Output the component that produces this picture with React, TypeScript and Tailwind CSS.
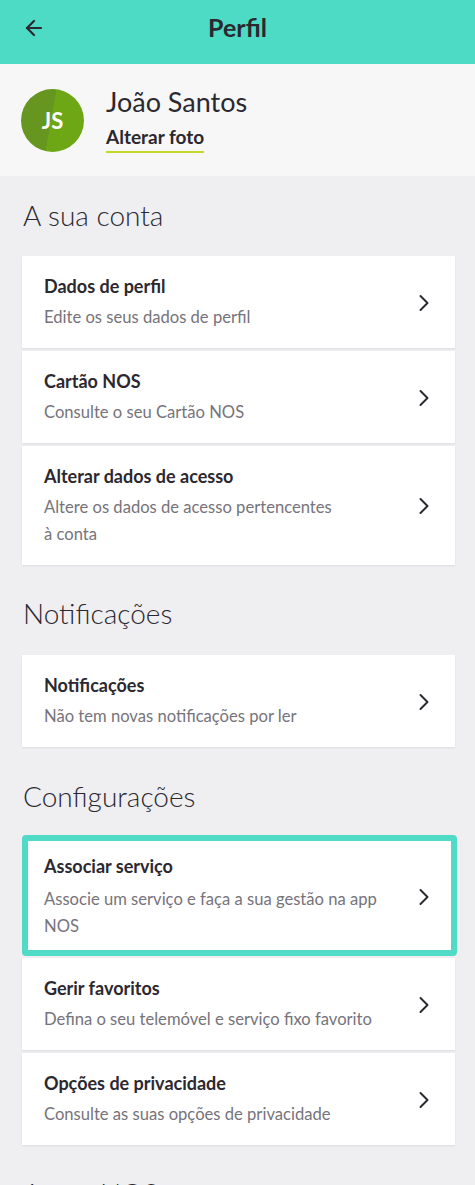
import { ArrowLeft, ChevronRight } from "lucide-react";

type MenuItem = {
  title: string;
  lines: string[];
};

const accountItems: MenuItem[] = [
  { title: "Dados de perfil", lines: ["Edite os seus dados de perfil"] },
  { title: "Cartão NOS", lines: ["Consulte o seu Cartão NOS"] },
  {
    title: "Alterar dados de acesso",
    lines: ["Altere os dados de acesso pertencentes", "à conta"],
  },
];

const settingsItems: MenuItem[] = [
  { title: "Gerir favoritos", lines: ["Defina o seu telemóvel e serviço fixo favorito"] },
  { title: "Opções de privacidade", lines: ["Consulte as suas opções de privacidade"] },
];

function ItemText({ item, highlighted }: { item: MenuItem; highlighted?: boolean }) {
  return (
    <div className="min-w-0 flex-1">
      <p className="text-[18px] font-bold leading-[24px] text-[#2b2830]">{item.title}</p>
      <p
        className={`${highlighted ? "mt-[8px]" : "mt-[6px]"} text-[16.6px] leading-[27px] text-[#76737b]`}
      >
        {item.lines.map((line, i) => (
          <span key={i} className="block whitespace-nowrap">
            {line}
          </span>
        ))}
      </p>
    </div>
  );
}

function Card({ item }: { item: MenuItem }) {
  return (
    <button
      type="button"
      className="flex w-full items-center bg-white pb-[17px] pl-[22px] pr-[17px] pt-[18px] text-left shadow-[0_1px_2px_rgba(0,0,0,0.08)]"
    >
      <ItemText item={item} />
      <ChevronRight size={28} strokeWidth={1.7} className="shrink-0 text-[#2b2830]" />
    </button>
  );
}

function SectionTitle({ children }: { children: string }) {
  return (
    <h2 className="pl-[23px] text-[28px] font-light leading-[32px] text-[#2b2830]">{children}</h2>
  );
}

export default function App() {
  return (
    <div className="min-h-[1185px] w-full bg-[#efeff1] font-['Lato',sans-serif]">
      <header className="relative flex h-[64px] items-center justify-center bg-[#4ddbc6] pb-[8px]">
        <button type="button" className="absolute left-[22px] top-[16px] text-[#2b2830]" aria-label="Voltar">
          <ArrowLeft size={24} strokeWidth={2.2} />
        </button>
        <h1 className="text-[25px] font-bold text-[#2b2830]">Perfil</h1>
      </header>

      <section className="flex h-[112px] items-center gap-[22px] bg-[#f7f7f7] pl-[21px]">
        <div className="flex h-[63px] w-[63px] items-center justify-center rounded-full bg-[linear-gradient(100deg,#66961f_0%,#66961f_48%,#6da715_48%,#6da715_100%)]">
          <span className="text-[22px] font-bold text-white">JS</span>
        </div>
        <div className="-mt-[2px] flex flex-col">
          <p className="text-[27px] leading-[32px] text-[#2b2830]">João Santos</p>
          <button
            type="button"
            className="mt-[7px] self-start border-b-2 border-[#c4d82b] pb-[2px] text-[19px] font-bold leading-[24px] text-[#2b2830]"
          >
            Alterar foto
          </button>
        </div>
      </section>

      <div className="pt-[23px]">
        <SectionTitle>A sua conta</SectionTitle>
        <div className="mt-[25px] flex flex-col gap-[3px] pl-[22px] pr-[20px]">
          {accountItems.map((item) => (
            <Card key={item.title} item={item} />
          ))}
        </div>

        <div className="mt-[32px]">
          <SectionTitle>Notificações</SectionTitle>
        </div>
        <div className="mt-[26px] pl-[22px] pr-[20px]">
          <Card item={{ title: "Notificações", lines: ["Não tem novas notificações por ler"] }} />
        </div>

        <div className="mt-[33px]">
          <SectionTitle>Configurações</SectionTitle>
        </div>
        <div className="mt-[23px] flex flex-col gap-[2px] pl-[22px] pr-[18px]">
          <button
            type="button"
            className="flex w-full items-center rounded-[4px] border-[6px] border-[#4fdbc6] bg-white pb-[10px] pl-[16px] pr-[13px] pt-[13px] text-left"
          >
            <ItemText
              highlighted
              item={{
                title: "Associar serviço",
                lines: ["Associe um serviço e faça a sua gestão na app", "NOS"],
              }}
            />
            <ChevronRight size={28} strokeWidth={1.7} className="shrink-0 text-[#2b2830]" />
          </button>
          <div className="flex flex-col gap-[3px] pr-[2px]">
            {settingsItems.map((item) => (
              <Card key={item.title} item={item} />
            ))}
          </div>
        </div>

        <div className="mt-[32px] pb-[40px]">
          <SectionTitle>A app NOS</SectionTitle>
        </div>
      </div>
    </div>
  );
}
